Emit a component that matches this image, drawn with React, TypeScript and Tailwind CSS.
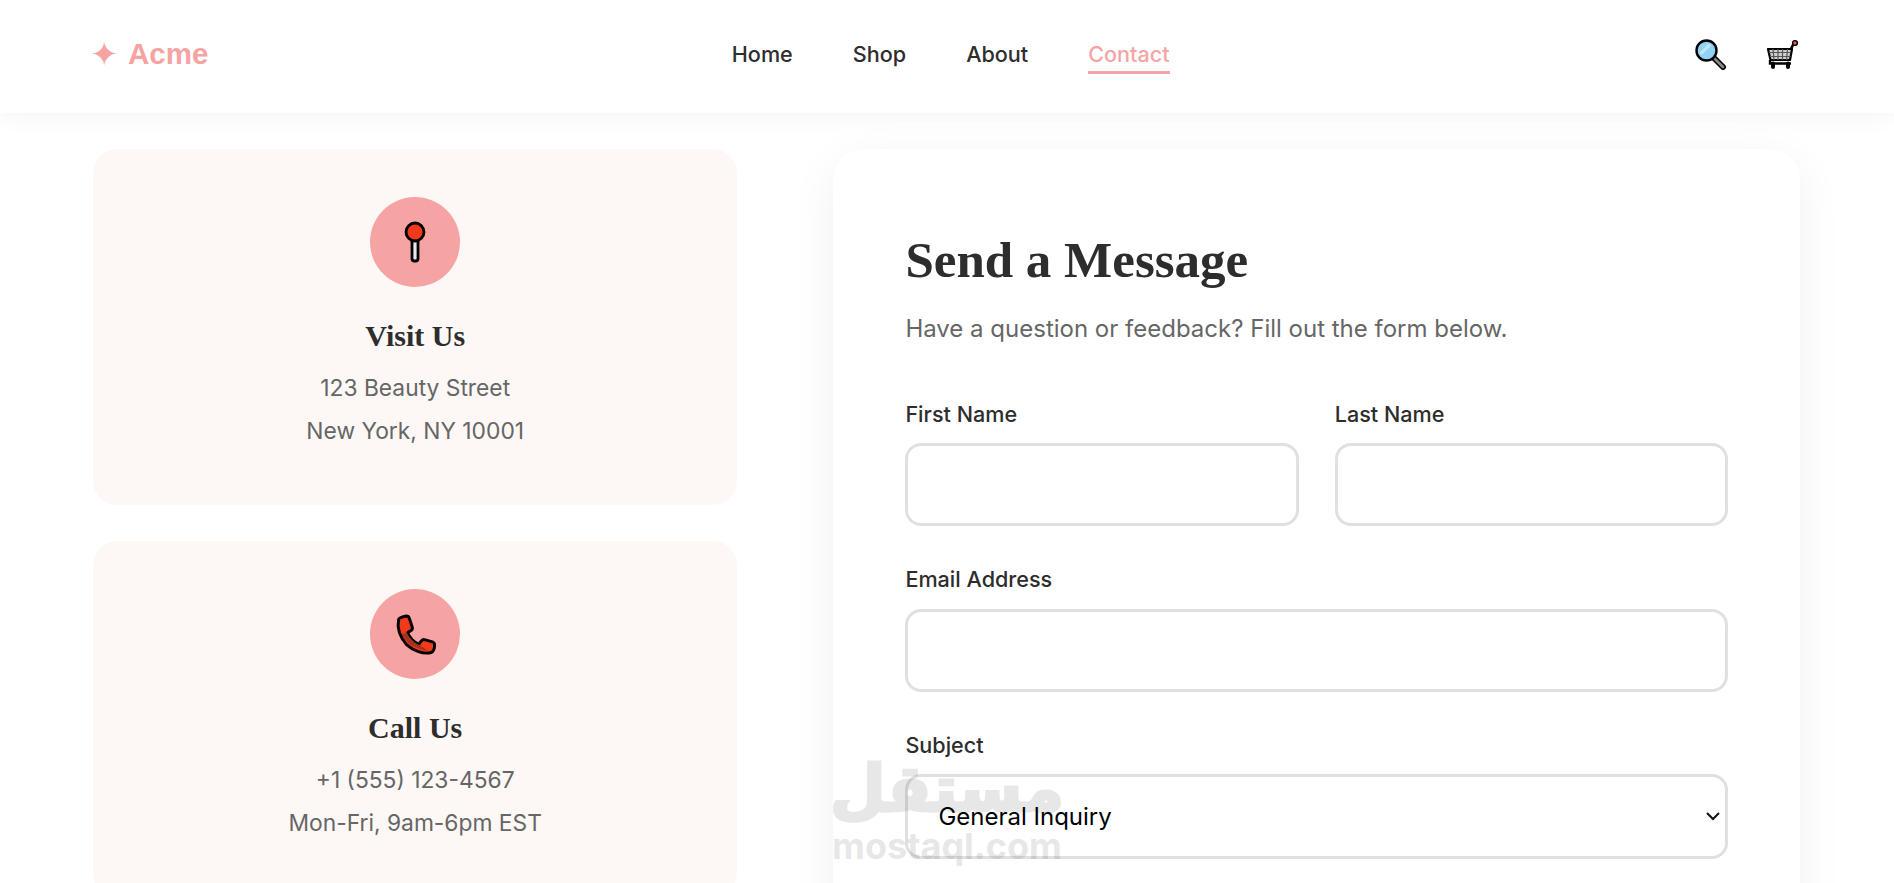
import React from 'react';

const navLinks = ['Home', 'Shop', 'About', 'Contact'];

const SearchIcon = () => (
  <svg width="34" height="34" viewBox="0 0 34 34" fill="none">
    <line x1="21" y1="21" x2="30" y2="30" stroke="#000" strokeWidth="6" strokeLinecap="round" />
    <line x1="21" y1="21" x2="30" y2="30" stroke="#8a8a8a" strokeWidth="2.6" strokeLinecap="round" />
    <circle cx="13.5" cy="13.5" r="10" fill="#92d3f5" stroke="#000" strokeWidth="2.4" />
    <path d="M7.5 17 L17 7.5" stroke="#c4e7fa" strokeWidth="3" />
  </svg>
);

const CartIcon = () => (
  <svg width="34" height="34" viewBox="0 0 34 34" fill="none">
    <path d="M25.5 13 L28.5 7" stroke="#000" strokeWidth="2.6" />
    <circle cx="30" cy="6" r="2.4" fill="#ea5a47" stroke="#000" strokeWidth="1.4" />
    <path d="M3 12 H27 L25 23 H5.5 Z" fill="#d0cfce" stroke="#000" strokeWidth="2.2" strokeLinejoin="round" />
    <path d="M8 12 L9 23 M13 12 V23 M17.5 12 V23 M22.5 12 L21.5 23 M4 15.5 H26 M5 19.5 H25.5" stroke="#555" strokeWidth="1.2" />
    <path d="M5 23 V26.5 H26" stroke="#000" strokeWidth="2.4" fill="none" />
    <path d="M8 26.5 V30 M23 26.5 V30" stroke="#000" strokeWidth="4" strokeLinecap="round" />
  </svg>
);

const PinIcon = () => (
  <svg width="32" height="44" viewBox="0 0 32 44" fill="none">
    <rect x="13" y="16" width="6" height="25" rx="2.5" fill="#e8e8e8" stroke="#000" strokeWidth="2.8" />
    <circle cx="16" cy="12" r="9" fill="#f1391b" stroke="#000" strokeWidth="2.8" />
  </svg>
);

const PhoneIcon = () => (
  <svg width="45" height="45" viewBox="0 0 40 40" fill="none">
    <path
      d="M5 6.5 C3.5 14 6 22 12 29 C18 34.5 27 38 34 36 C37 35 37 30.5 37 28.5 C37 27.5 36 27 35 26.5 L28 24.5 C26.5 24 25.5 25 24.5 26.5 L23 28.5 C19 27.5 14.5 22.5 13 18.5 L16 16.5 C17.5 15.5 17.5 14.5 17 13 L14.5 5.5 C14 4 13 3.5 12 3.5 C9 4 6 4.5 5 6.5 Z"
      fill="#f1391b"
      stroke="#000"
      strokeWidth="2.6"
      strokeLinejoin="round"
    />
    <path d="M8 20 C12 28 20 33 31 34.5 L24 29.5 C19 28 14.5 23 12 18 Z" fill="#a5331f" />
  </svg>
);

const InfoCard = ({ icon, title, lines }: { icon: React.ReactNode; title: string; lines: string[] }) => (
  <div className="rounded-[24px] bg-[#fdf8f5] pt-[48px] pb-[53px] px-[48px] flex flex-col items-center text-center">
    <div className="w-[90px] h-[90px] rounded-full bg-[#f5a3a3] flex items-center justify-center mb-[29px]">
      {icon}
    </div>
    <h3 className="font-['Liberation_Serif',serif] font-bold text-[30px] leading-[40px] text-[#2d2d2d] mb-[10px]">{title}</h3>
    {lines.map(line => (
      <p key={line} className="text-[22.8px] leading-[43px] text-[#666666]">{line}</p>
    ))}
  </div>
);

const Field = ({ label, className, labelClass = 'mb-[14px]' }: { label: string; className?: string; labelClass?: string }) => (
  <div className={className}>
    <label className={`block text-[21.6px] leading-[32px] font-medium text-[#2d2d2d] ${labelClass}`}>{label}</label>
    <input className="block w-full h-[83px] border-[3px] border-[#e0e0e0] rounded-[16px] bg-white" />
  </div>
);

export default function App() {
  return (
    <div className="relative h-[883px] overflow-hidden bg-white font-['Inter',sans-serif]">
      <header className="relative z-10 h-[113px] bg-white shadow-[0_2px_24px_rgba(0,0,0,0.05)] pl-[93px] pr-[94px] pb-[5px] flex items-center justify-between">
        <div className="flex items-center gap-[10px] text-[#f5a3a3]">
          <span className="text-[34px] leading-none ml-[-3px]">✦</span>
          <span className="text-[29.5px] font-bold font-['Liberation_Sans',sans-serif] mt-[1px]">Acme</span>
        </div>
        <nav className="flex items-center gap-[60px]">
          {navLinks.map(link => (
            <a
              key={link}
              className={
                link === 'Contact'
                  ? 'text-[21.6px] font-medium text-[#f5a3a3] border-b-[3px] border-[#f5a3a3] pb-[1px] mt-[4px]'
                  : 'text-[21.6px] font-medium text-[#2d2d2d]'
              }
            >
              {link}
            </a>
          ))}
        </nav>
        <div className="flex items-center gap-[38px] mr-[1px]">
          <SearchIcon />
          <CartIcon />
        </div>
      </header>

      <main className="pl-[93px] pr-[94px] pt-[36px] grid grid-cols-[1fr_1.5fr] gap-[96px] items-start">
        <div className="flex flex-col gap-[36px]">
          <InfoCard icon={<PinIcon />} title="Visit Us" lines={['123 Beauty Street', 'New York, NY 10001']} />
          <InfoCard icon={<PhoneIcon />} title="Call Us" lines={['+1 (555) 123-4567', 'Mon-Fri, 9am-6pm EST']} />
        </div>

        <div className="rounded-[30px] bg-white shadow-[0_12px_48px_rgba(0,0,0,0.06)] p-[72px]">
          <h2 className="font-['Liberation_Serif',serif] font-bold text-[51px] leading-[78px] text-[#2d2d2d] mb-[12px]">Send a Message</h2>
          <p className="text-[24px] leading-[36px] text-[#666666] mb-[51px]">Have a question or feedback? Fill out the form below.</p>
          <div className="grid grid-cols-2 gap-[36px] mb-[37px]">
            <Field label="First Name" labelClass="mb-[13px]" />
            <Field label="Last Name" labelClass="mb-[13px]" />
          </div>
          <Field label="Email Address" className="mb-[37px]" />
          <label className="block text-[21.6px] leading-[32px] font-medium text-[#2d2d2d] mb-[13px]">Subject</label>
          <div className="relative">
            <select className="block w-full h-[85px] appearance-none border-[3px] border-[#e0e0e0] rounded-[16px] bg-white px-[30px] text-[24px] text-black">
              <option>General Inquiry</option>
            </select>
            <svg className="absolute right-[8px] top-[36px]" width="14" height="12" viewBox="0 0 14 12" fill="none">
              <path d="M1 3 L7 9 L13 3" stroke="#111" strokeWidth="2" />
            </svg>
          </div>
        </div>
      </main>

      {/* mostaql watermark */}
      <div className="absolute left-[833px] top-[754px] w-[228px] flex flex-col items-center text-black opacity-[0.09] pointer-events-none select-none">
        <span className="font-['DejaVu_Sans',sans-serif] font-bold text-[64px] leading-[70px] [-webkit-text-stroke:3px_black]" dir="rtl">مستقل</span>
        <span className="font-['Inter',sans-serif] font-bold text-[36px] leading-[44px]">mostaql.com</span>
      </div>
    </div>
  );
}
